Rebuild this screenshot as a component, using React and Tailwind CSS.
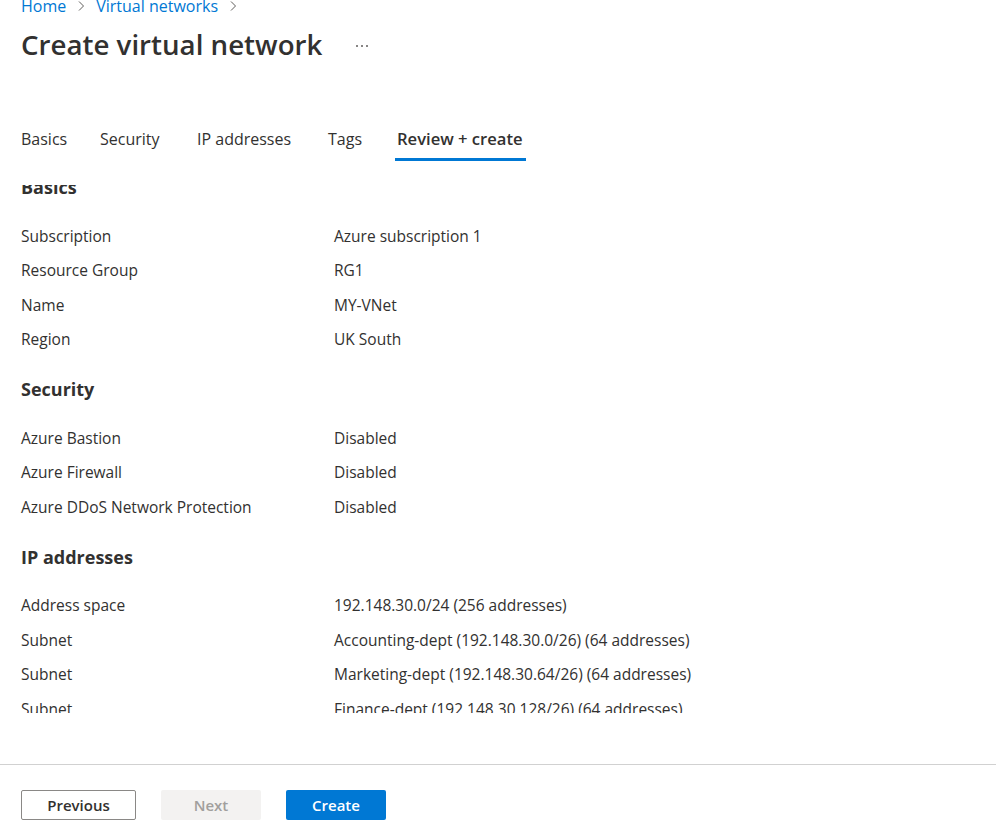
const sections = [
  {
    title: 'Basics',
    rows: [
      ['Subscription', 'Azure subscription 1'],
      ['Resource Group', 'RG1'],
      ['Name', 'MY-VNet'],
      ['Region', 'UK South'],
    ],
  },
  {
    title: 'Security',
    rows: [
      ['Azure Bastion', 'Disabled'],
      ['Azure Firewall', 'Disabled'],
      ['Azure DDoS Network Protection', 'Disabled'],
    ],
  },
  {
    title: 'IP addresses',
    rows: [
      ['Address space', '192.148.30.0/24 (256 addresses)'],
      ['Subnet', 'Accounting-dept (192.148.30.0/26) (64 addresses)'],
      ['Subnet', 'Marketing-dept (192.148.30.64/26) (64 addresses)'],
      ['Subnet', 'Finance-dept (192.148.30.128/26) (64 addresses)'],
    ],
  },
];

const tabs = [
  { label: 'Basics', w: 'w-[79px]' },
  { label: 'Security', w: 'w-[97px]' },
  { label: 'IP addresses', w: 'w-[131px]' },
  { label: 'Tags', w: 'w-[69px]' },
  { label: 'Review + create', w: 'w-[131px]', active: true },
];

function Chevron() {
  return (
    <svg width="8" height="12" viewBox="0 0 8 12" className="mx-[11px]">
      <path d="M2 1.5 L6.5 6 L2 10.5" fill="none" stroke="#605e5c" strokeWidth="1" />
    </svg>
  );
}

export default function App() {
  return (
    <div
      className="w-full h-[836px] overflow-hidden bg-white text-[#323130] flex flex-col"
      style={{ fontFamily: '"Open Sans", "Noto Sans", sans-serif' }}
    >
      {/* Breadcrumb */}
      <div className="mt-[-5px] h-[22px] pl-[21px] flex items-center text-[16px] leading-[22px] text-[#0078d4]">
        <span>Home</span>
        <Chevron />
        <span>Virtual networks</span>
        <Chevron />
      </div>

      {/* Title */}
      <div className="mt-[9px] h-[36px] pl-[21px] flex items-center">
        <h1 className="text-[27.7px] leading-[36px] font-semibold text-[#323130]">Create virtual network</h1>
        <div className="ml-[34px] mt-[4px] flex gap-[3px]">
          <span className="w-[2px] h-[2px] rounded-full bg-[#605e5c]" />
          <span className="w-[2px] h-[2px] rounded-full bg-[#605e5c]" />
          <span className="w-[2px] h-[2px] rounded-full bg-[#605e5c]" />
        </div>
      </div>

      {/* Tabs */}
      <div className="mt-[65px] pl-[19px] flex">
        {tabs.map((t) => (
          <div key={t.label} className={`${t.w} flex flex-col`}>
            <span
              className={`pl-[2px] leading-[24px] whitespace-nowrap ${
                t.active ? 'text-[16.6px] font-semibold' : 'text-[16px]'
              }`}
            >
              {t.label}
            </span>
            <div className={`mt-[7px] h-[3px] ${t.active ? 'bg-[#0078d4]' : 'bg-transparent'}`} />
          </div>
        ))}
      </div>

      {/* Review content, scrolled */}
      <div className="mt-[24px] h-[528px] overflow-hidden">
        <div className="mt-[-10px] pl-[21px]">
          {sections.map((s) => (
            <div key={s.title} className="mb-[20px]">
              <h2 className="h-[24px] leading-[24px] text-[18px] font-bold mb-[20px]">{s.title}</h2>
              {s.rows.map(([label, value], i) => (
                <div key={i} className="h-[34.5px] flex items-center text-[15.5px]">
                  <span className="w-[313px] shrink-0">{label}</span>
                  <span>{value}</span>
                </div>
              ))}
            </div>
          ))}
        </div>
      </div>

      {/* Footer */}
      <div className="mt-[51px] border-t border-[#d1d1d1] pt-[25px] pl-[21px] flex gap-[25px]">
        <button className="w-[115px] h-[30px] border border-[#8a8886] rounded-[2px] bg-white text-[15px] font-semibold text-[#323130]">
          Previous
        </button>
        <button className="w-[100px] h-[30px] rounded-[2px] bg-[#f3f2f1] text-[15px] font-semibold text-[#a19f9d]">
          Next
        </button>
        <button className="w-[100px] h-[30px] rounded-[2px] bg-[#0078d4] text-[15px] font-semibold text-white">
          Create
        </button>
      </div>
    </div>
  );
}
